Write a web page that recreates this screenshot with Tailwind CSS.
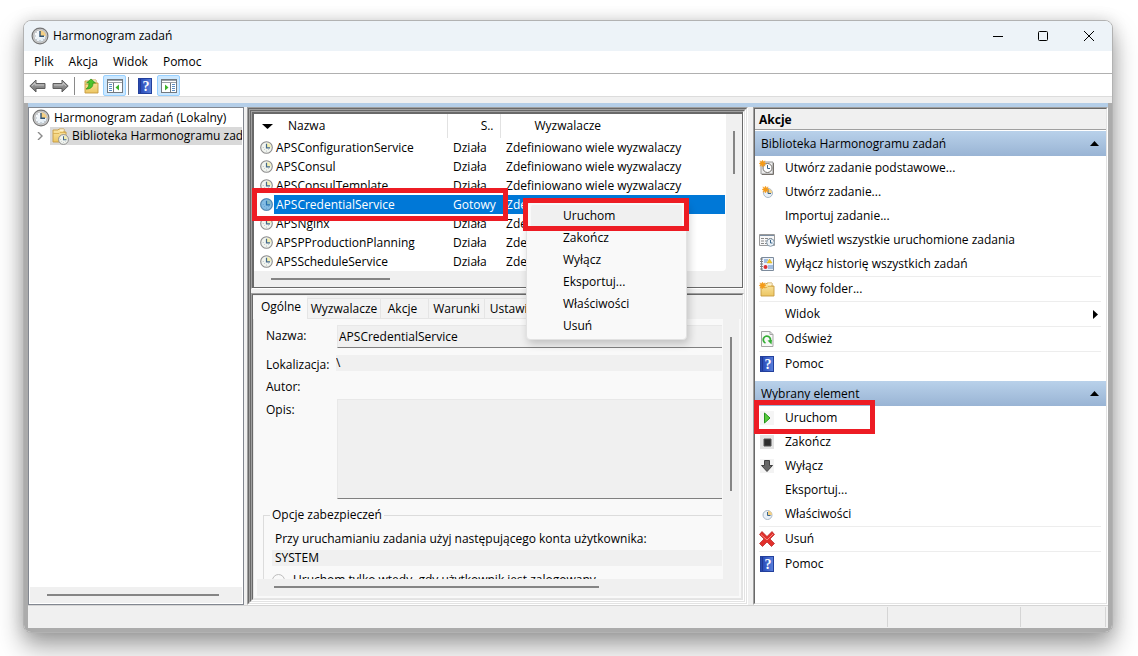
<!DOCTYPE html>
<html lang="pl">
<head>
<meta charset="utf-8">
<title>Harmonogram zadań</title>
<script src="https://cdn.jsdelivr.net/npm/@tailwindcss/browser@4"></script>
</head>
<body class="bg-white font-['Open_Sans','Noto_Sans',sans-serif] text-xs leading-4 text-black">
<svg class="absolute size-0" aria-hidden="true">
  <linearGradient id="steel" x1="0" y1="0" x2="1" y2="1"><stop offset="0" stop-color="#fff"/><stop offset="1" stop-color="#dde9f3"/></linearGradient>
  <linearGradient id="arrowg" x1="0" y1="0" x2="0" y2="1"><stop offset="0" stop-color="#b5b5b5"/><stop offset="1" stop-color="#6c6c6c"/></linearGradient>
  <linearGradient id="helpg" x1="0" y1="0" x2="1" y2="0"><stop offset="0" stop-color="#2746a8"/><stop offset=".25" stop-color="#2d50bd"/><stop offset="1" stop-color="#5b82dc"/></linearGradient>
  <linearGradient id="foldg" x1="0" y1="0" x2="0" y2="1"><stop offset="0" stop-color="#fbe7a8"/><stop offset="1" stop-color="#ecc662"/></linearGradient>
  <symbol id="clock" viewBox="0 0 18 18"><circle cx="9" cy="9" r="7.9" fill="#dcdcdc" stroke="#757575" stroke-width="1.2"/><circle cx="9" cy="9" r="6.2" fill="url(#steel)" stroke="#9a9a9a" stroke-width=".8"/><path d="M9 9V3.2A5.8 5.8 0 0 1 14.8 9Z" fill="#f3cf85"/><path d="M9 4v5.2h4" fill="none" stroke="#2f5272" stroke-width="1.4"/><path d="M3.8 9h1M9 13.2v1M5.5 5.5l.6.6M5.5 12.5l.6-.6M12.5 12.5l-.6-.6" stroke="#8292a0" stroke-width=".8"/></symbol>
  <symbol id="task" viewBox="0 0 13 13"><circle cx="6.5" cy="6.5" r="5.8" fill="#f1f4ef" stroke="#8b8b8b" stroke-width="1.1"/><path d="M7 6.5V2.2A4.3 4.3 0 0 1 11 6.5Z" fill="#f2eeb0"/><path d="M6.5 2.8v4.1h3.5" fill="none" stroke="#426689" stroke-width="1.2"/><path d="M2.8 6.5h.8M6.5 9.7v.8M4 9l.6-.6M9 9l-.6-.6" stroke="#9ba4ab" stroke-width=".8"/></symbol>
  <symbol id="star" viewBox="0 0 8 8"><path d="M4 0l.8 2.200L7 1 5.800 3.200 8 4l-2.200.8L7 7 4.800 5.800 4 8l-.8-2.200L1 7l1.200-2.200L0 4l2.200-.8L1 1l2.200 1.200Z" fill="#f59b18" stroke="#f59b18" stroke-width=".6"/></symbol>
  <symbol id="help" viewBox="0 0 14 16"><rect x=".5" y=".5" width="13" height="15" fill="url(#helpg)" stroke="#23409c"/><path d="M2.500 1v14" stroke="#203a94"/><text x="8" y="13" text-anchor="middle" font-size="14" font-family="Liberation Serif, serif" font-weight="bold" fill="#fff">?</text></symbol>
  <symbol id="folder" viewBox="0 0 16 16"><path d="M2 3h5l1-1h5v3h2v10H2Z" fill="url(#foldg)" stroke="#c69a3e" stroke-width=".9"/><path d="M9 3h4" stroke="#fff"/><path d="M2 6.500h6l1-1h6" stroke="#d5ab4d" stroke-width=".8" fill="none"/></symbol>
  <symbol id="arrow" viewBox="0 0 17 14"><path d="M.8 7 7 1v3.500h9v5H7V13Z" fill="url(#arrowg)" stroke="#5e5e5e"/><path d="M3 7 6 4v2h9" fill="none" stroke="#d4d4d4" stroke-width=".7"/></symbol>
</svg>

<div class="flex h-screen min-h-96 flex-col pt-5 pr-[25px] pb-[23px] pl-[23px]">
<div class="flex min-h-0 flex-1 flex-col overflow-hidden rounded-lg border border-[#b2b2b2] bg-white shadow-[0_14px_26px_rgba(0,0,0,0.36),0_0_16px_rgba(0,0,0,0.14)]">

  <header class="flex h-[30px] shrink-0 items-center bg-[#edf3f8] pl-[7px]">
    <svg class="size-[18px]"><use href="#clock"/></svg>
    <h1 class="ml-1">Harmonogram zadań</h1>
    <div class="ml-auto flex h-full">
      <button class="grid w-[45px] place-items-center" aria-label="Minimalizuj"><svg class="size-3" viewBox="0 0 12 12"><path d="M1 6.500h10" stroke="#000"/></svg></button>
      <button class="grid w-[46px] place-items-center" aria-label="Maksymalizuj"><svg class="size-3" viewBox="0 0 12 12"><rect x="1.500" y="1.500" width="9" height="9" rx="1" fill="none" stroke="#000"/></svg></button>
      <button class="grid w-[46px] place-items-center" aria-label="Zamknij"><svg class="size-3" viewBox="0 0 12 12"><path d="m1 1 10 10M11 1 1 11" stroke="#000"/></svg></button>
    </div>
  </header>

  <nav class="flex h-[23px] shrink-0 items-center gap-[15px] border-b border-[#b0b0b0] px-2.5">
    <button>Plik</button><button>Akcja</button><button>Widok</button><button>Pomoc</button>
  </nav>

  <div class="flex h-[23px] shrink-0 items-center border-b border-[#dcdcdc] pt-px pl-[5px]">
    <button aria-label="Wstecz"><svg class="h-3.5 w-[17px]"><use href="#arrow"/></svg></button>
    <button class="ml-1.5" aria-label="Dalej"><svg class="h-3.5 w-[17px] -scale-x-100"><use href="#arrow"/></svg></button>
    <span class="ml-[5px] h-[18px] w-px bg-[#8a8a8a]"></span>
    <button class="ml-2" aria-label="W górę"><svg class="size-4" viewBox="0 0 16 16"><use href="#folder"/><path d="M3 11C5 10 6 8 6 5H3.500L8 1l4.500 4H10c0 4-2 6-7 6Z" fill="#4cc22a" stroke="#2d8f1d" stroke-width=".7"/></svg></button>
    <button class="ml-1 grid h-[21px] w-[23px] place-items-center rounded-xs border border-[#99d1ff] bg-[#cce8ff]" aria-label="Pokaż drzewo konsoli"><svg class="h-3.5 w-4" viewBox="0 0 16 14"><rect x=".5" y=".5" width="15" height="13" fill="#fff" stroke="#72797f"/><path d="M1 1.500h14M1 3.500h14" stroke="#9aa1a7"/><path d="M6.500 4v9" stroke="#72797f"/><path d="M2 5.500h3M2 7.500h3M2 9.500h3M2 11.500h3" stroke="#5c8fc4"/><path d="m12 5.500-3.500 3 3.500 3Z" fill="#3cb32a"/></svg></button>
    <span class="ml-0.5 h-[18px] w-px bg-[#8a8a8a]"></span>
    <button class="ml-[9px]" aria-label="Pomoc"><svg class="h-4 w-3.5"><use href="#help"/></svg></button>
    <button class="ml-[5px] grid h-[21px] w-[23px] place-items-center rounded-xs border border-[#99d1ff] bg-[#cce8ff]" aria-label="Pokaż okienko akcji"><svg class="h-3.5 w-4" viewBox="0 0 16 14"><rect x=".5" y=".5" width="15" height="13" fill="#fff" stroke="#72797f"/><path d="M1 1.500h14M1 3.500h14" stroke="#9aa1a7"/><path d="M9.500 4v9" stroke="#72797f"/><path d="M11 5.500h3M11 7.500h3M11 9.500h3M11 11.500h3" stroke="#5c8fc4"/><path d="m4 5.500 3.500 3-3.500 3Z" fill="#3cb32a"/></svg></button>
  </div>
  <div class="h-1.5 shrink-0 bg-[#f0f0f0]"></div>

  <div class="flex min-h-0 flex-1 flex-col bg-[#ababab] px-1 pb-1">
    <div class="h-1 shrink-0 bg-[#b4cee8]"></div>
    <main class="flex min-h-0 flex-1 bg-[#f0f0f0]">

      <aside class="flex w-[216px] shrink-0 flex-col border border-[#828790] bg-white p-px">
        <ul class="flex-1">
          <li class="flex h-[18px] items-center pl-[2px]"><svg class="size-[18px]"><use href="#clock"/></svg><span class="ml-1 whitespace-nowrap">Harmonogram zadań (Lokalny)</span></li>
          <li class="flex h-[18px] items-center">
            <svg class="mx-[7px] h-2 w-1.5 shrink-0" viewBox="0 0 6 8"><path d="m1 0 4 4-4 4" fill="none" stroke="#8a8a8a" stroke-width="1.400"/></svg>
            <div class="flex h-full min-w-0 flex-1 items-center overflow-hidden bg-[#d9d9d9] pl-px"><svg class="size-[18px] shrink-0" viewBox="0 0 18 18"><use href="#folder" width="16" height="16"/><use href="#task" x="7" y="7" width="11" height="11"/></svg><span class="ml-[3px] whitespace-nowrap">Biblioteka Harmonogramu zadań</span></div>
          </li>
        </ul>
        <div class="flex h-4 items-center bg-[#f0f0f0] pr-[23px] pl-[17px]"><div class="h-0.5 flex-1 bg-[#858585]"></div></div>
      </aside>

      <section class="relative ml-[3px] min-w-0 flex-1 border border-t-[#a0a0a0] border-r-white border-b-white border-l-[#a0a0a0]">
       <div class="h-full border border-t-[#696969] border-r-[#e3e3e3] border-b-[#e3e3e3] border-l-[#696969]">
        <div class="h-full border border-t-[#a0a0a0] border-r-white border-b-white border-l-[#a0a0a0]">
         <div class="flex h-full flex-col border border-t-[#696969] border-r-[#e3e3e3] border-b-[#e3e3e3] border-l-[#696969]">

          <div class="shrink-0 border border-t-[#a0a0a0] border-r-white border-b-white border-l-[#a0a0a0]">
            <div class="border border-t-2 border-l-2 border-[#696969] bg-[#f0f0f0]">
              <div class="flex">
                <div class="min-w-0 flex-1 overflow-hidden rounded-br-sm bg-white pr-px">
                  <table class="w-full table-fixed border-collapse text-left whitespace-nowrap">
                    <colgroup><col class="w-5"><col class="w-[173px]"><col class="w-[53px]"><col></colgroup>
                    <thead><tr class="h-6 *:font-normal">
                      <th colspan="2" class="border-r border-[#e2e2e2] p-0"><span class="flex items-center pl-2"><svg class="h-[5px] w-[11px]" viewBox="0 0 11 5"><path d="M0 0h11L5.500 5Z"/></svg><span class="ml-[15px]">Nazwa</span></span></th>
                      <th class="border-r border-[#e2e2e2] py-0 pr-1.5 pl-0 text-right">S..</th>
                      <th class="py-0 pr-0 pl-[34px]">Wyzwalacze</th>
                    </tr></thead>
                    <tbody>
                      <tr class="h-[19px]"><td class="p-0 pl-1.5"><svg class="size-[13px]"><use href="#task"/></svg></td><td class="p-0 pl-0.5">APSConfigurationService</td><td class="p-0 pl-1.5">Działa</td><td class="p-0 pl-1.5">Zdefiniowano wiele wyzwalaczy</td></tr>
                      <tr class="h-[19px]"><td class="p-0 pl-1.5"><svg class="size-[13px]"><use href="#task"/></svg></td><td class="p-0 pl-0.5">APSConsul</td><td class="p-0 pl-1.5">Działa</td><td class="p-0 pl-1.5">Zdefiniowano wiele wyzwalaczy</td></tr>
                      <tr class="h-[19px]"><td class="p-0 pl-1.5"><svg class="size-[13px]"><use href="#task"/></svg></td><td class="p-0 pl-0.5">APSConsulTemplate</td><td class="p-0 pl-1.5">Działa</td><td class="p-0 pl-1.5">Zdefiniowano wiele wyzwalaczy</td></tr>
                      <tr class="h-[19px] text-white"><td class="p-0 pl-1.5"><span class="relative block size-[13px]"><svg class="size-[13px]"><use href="#task"/></svg><span class="absolute inset-0 rounded-full bg-[#0078d7]/45"></span></span></td><td class="bg-[#0078d7] p-0 pl-0.5">APSCredentialService</td><td class="bg-[#0078d7] p-0 pl-1.5">Gotowy</td><td class="bg-[#0078d7] p-0 pl-1.5">Zdefiniowano wiele wyzwalaczy</td></tr>
                      <tr class="h-[19px]"><td class="p-0 pl-1.5"><svg class="size-[13px]"><use href="#task"/></svg></td><td class="p-0 pl-0.5">APSNginx</td><td class="p-0 pl-1.5">Działa</td><td class="p-0 pl-1.5">Zdefiniowano wiele wyzwalaczy</td></tr>
                      <tr class="h-[19px]"><td class="p-0 pl-1.5"><svg class="size-[13px]"><use href="#task"/></svg></td><td class="p-0 pl-0.5">APSPProductionPlanning</td><td class="p-0 pl-1.5">Działa</td><td class="p-0 pl-1.5">Zdefiniowano wiele wyzwalaczy</td></tr>
                      <tr class="h-[19px]"><td class="p-0 pl-1.5"><svg class="size-[13px]"><use href="#task"/></svg></td><td class="p-0 pl-0.5">APSScheduleService</td><td class="p-0 pl-1.5">Działa</td><td class="p-0 pl-1.5">Zdefiniowano wiele wyzwalaczy</td></tr>
                    </tbody>
                  </table>
                </div>
                <div class="w-4 shrink-0 pt-[17px] pl-[7px]"><div class="h-[43px] w-0.5 bg-[#858585]"></div></div>
              </div>
              <div class="h-4 pt-[7px] pl-[17px]"><div class="h-0.5 w-[119px] bg-[#858585]"></div></div>
            </div>
          </div>

          <div class="mt-1 flex min-h-0 flex-1 flex-col border border-t-[#a0a0a0] border-r-white border-b-white border-l-[#a0a0a0]">
            <div class="flex min-h-0 flex-1 flex-col border border-t-[#696969] border-r-[#e3e3e3] border-b-[#e3e3e3] border-l-[#696969] bg-[#f0f0f0] pt-px">
              <div class="flex h-[23px] shrink-0 items-end" role="tablist">
                <button class="h-full w-[54px] bg-[#f9f9f9] pb-0.5 pl-0.5" role="tab" aria-selected="true">Ogólne</button>
                <button class="h-[21px] w-[74px] border border-[#e5e5e5] bg-[#f3f3f3] px-0" role="tab">Wyzwalacze</button>
                <button class="h-[21px] w-12 border border-l-0 border-[#e5e5e5] bg-[#f3f3f3] px-0 pr-1" role="tab">Akcje</button>
                <button class="h-[21px] w-14 border border-l-0 border-[#e5e5e5] bg-[#f3f3f3] px-0" role="tab">Warunki</button>
                <button class="h-[21px] w-[72px] border border-l-0 border-[#e5e5e5] bg-[#f3f3f3] px-0" role="tab">Ustawienia</button>
              </div>
              <div class="flex min-h-0 flex-1 flex-col border border-t-0 border-[#e5e5e5] bg-[#f9f9f9] pr-0.5 pb-0.5">
                <div class="flex min-h-0 flex-1">
                  <div class="min-w-0 flex-1 overflow-hidden pt-1.5 pr-px pl-3">
                    <div class="flex h-[23px]"><label for="nazwa" class="w-[71px] pt-[3px]">Nazwa:</label><input id="nazwa" readonly value="APSCredentialService" class="min-w-0 flex-1 border border-r-0 border-[#e8e8e8] border-b-[#808080] bg-[#f0f0f0] pl-px outline-none"></div>
                    <div class="mt-[7px] flex h-4"><label for="lok" class="w-[70px] pt-0.5">Lokalizacja:</label><input id="lok" readonly value="\" class="min-w-0 flex-1 bg-[#f0f0f0] outline-none"></div>
                    <div class="mt-2 h-4">Autor:</div>
                    <div class="mt-1 flex h-[100px]"><label for="opis" class="w-[71px] pt-[3px]">Opis:</label><textarea id="opis" readonly class="min-w-0 flex-1 resize-none border border-r-0 border-[#e8e8e8] border-b-[#808080] bg-[#f0f0f0] outline-none"></textarea></div>
                    <fieldset class="mt-2 -ml-[3px] border border-r-0 border-b-0 border-[#dcdcdc] pl-2">
                      <legend class="-ml-0.5 px-0.5">Opcje zabezpieczeń</legend>
                      <p class="mt-2 ml-[3px] h-4">Przy uruchamianiu zadania użyj następującego konta użytkownika:</p>
                      <p class="mt-[3px] h-4 bg-[#f0f0f0] pl-[3px]">SYSTEM</p>
                      <label class="mt-1.5 flex h-4 items-center"><input type="radio" disabled class="size-[13px] appearance-none rounded-full border border-[#bdbdbd] bg-[#f9f9f9]"><span class="ml-2">Uruchom tylko wtedy, gdy użytkownik jest zalogowany</span></label>
                    </fieldset>
                  </div>
                  <div class="w-4 shrink-0 bg-[#f0f0f0] pt-[18px] pl-[7px]"><div class="h-[154px] w-0.5 bg-[#858585]"></div></div>
                </div>
                <div class="ml-[3px] h-[17px] shrink-0 bg-[#f0f0f0] pt-[7px] pl-[17px]"><div class="h-0.5 w-[325px] bg-[#858585]"></div></div>
              </div>
            </div>
          </div>
         </div>
        </div>
       </div>

       <div class="absolute top-20 left-1 h-[33px] w-64 border-[5px] border-[#ed1c24]"></div>
       <div class="absolute top-[94px] left-[278px] flex w-[161px] flex-col rounded-sm border border-[#e2e2e2] bg-[#f9f9f9] px-1 py-0.5 shadow-[2px_4px_8px_rgba(0,0,0,0.2)]" role="menu">
         <button role="menuitem" class="h-[22px] rounded-xs bg-[#f0f0f0] pl-8 text-left">Uruchom</button>
         <button role="menuitem" class="h-[22px] pl-8 text-left">Zakończ</button>
         <button role="menuitem" class="h-[22px] pl-8 text-left">Wyłącz</button>
         <button role="menuitem" class="h-[22px] pl-8 text-left">Eksportuj...</button>
         <button role="menuitem" class="h-[22px] pl-8 text-left">Właściwości</button>
         <button role="menuitem" class="h-[22px] pl-8 text-left">Usuń</button>
       </div>
       <div class="absolute top-[90px] left-[275px] h-[33px] w-[166px] border-[5px] border-[#ed1c24]"></div>
      </section>

      <aside class="ml-[5px] flex w-[355px] shrink-0 flex-col border border-t-[#a0a0a0] border-r-white border-b-white border-l-[#a0a0a0]">
        <div class="flex-1 border border-t-[#696969] border-r-[#e3e3e3] border-b-[#e3e3e3] border-l-[#696969] bg-white">
          <h2 class="mb-px flex h-[21px] items-center border-b border-[#a0a0a0] bg-[#f0f0f0] pt-0.5 pl-1 font-bold">Akcje</h2>
          <h3 class="flex h-[25px] items-center justify-between bg-linear-to-b from-[#b9d1ea] to-[#99b4d4] pr-[7px] pl-1.5">Biblioteka Harmonogramu zadań<svg class="h-[5px] w-[9px]" viewBox="0 0 9 5"><path d="M0 5h9L4.500 0Z"/></svg></h3>
          <ul class="*:flex *:h-6 *:items-center">
            <li class="pl-1"><svg class="size-4" viewBox="0 0 16 16"><path d="M2 2h12v12H2Z" fill="#ececec" stroke="#989898"/><path d="M14.500 3v11.500H3" stroke="#75706b" fill="none"/><circle cx="8.500" cy="8" r="4.500" fill="#fff" stroke="#726f6b"/><path d="M8.500 5v3.500H11" stroke="#39658a" fill="none"/><use href="#star" width="7" height="7"/></svg><button class="ml-2.5">Utwórz zadanie podstawowe...</button></li>
            <li class="pl-1"><svg class="size-4" viewBox="0 0 16 16"><circle cx="9" cy="9" r="4.500" fill="#e9f0f7" stroke="#a8b7c5"/><path d="M9 9V5a4 4 0 0 1 4 4Z" fill="#f3cf85"/><path d="M9 6v3.500h3" stroke="#39658a" fill="none"/><use href="#star" x="3" y="2" width="7" height="7"/></svg><button class="ml-2.5">Utwórz zadanie...</button></li>
            <li class="pl-[30px]"><button>Importuj zadanie...</button></li>
            <li class="pl-1"><svg class="size-4" viewBox="0 0 16 16"><path d="M.5 2.500h15v11H.5Z" fill="#f7f7f7" stroke="#9a9a9a"/><path d="M1 3.500h14" stroke="#7b8da0"/><path d="M2 6.500h3m1 0h3m1 0h3M2 9h3m1 0h2M2 11.500h3m1 0h2" stroke="#888"/><circle cx="11.500" cy="10.500" r="3.800" fill="#eef3f8" stroke="#8499aa"/><path d="M11.500 8v3h2" fill="none" stroke="#39658a"/></svg><button class="ml-2.5">Wyświetl wszystkie uruchomione zadania</button></li>
            <li class="pl-1"><svg class="size-4" viewBox="0 0 16 16"><path d="M2.500 1.500h12v13h-12Z" fill="#edf3fb" stroke="#7c8b9c"/><path d="M1 3h3M1 5.500h3M1 8h3M1 10.500h3M1 13h3" stroke="#7c7c7c"/><path d="M5 4h4M5 6h3M9 10h5M9 12h5" stroke="#5687c5"/><path d="m10.500 3 2.500 4H8Z" fill="#f3cb20" stroke="#d0a512" stroke-width=".5"/><circle cx="6.500" cy="11" r="2" fill="#db2f2f"/></svg><button class="ml-2.5">Wyłącz historię wszystkich zadań</button></li>
          </ul>
          <hr class="mr-[5px] ml-1 border-[#ededed]">
          <div class="flex h-6 items-center pl-1"><svg class="size-4" viewBox="0 0 16 16"><use href="#folder"/><use href="#star" y="1" width="7" height="7"/></svg><button class="ml-2.5">Nowy folder...</button></div>
          <hr class="mr-[5px] ml-1 border-[#ededed]">
          <div class="flex h-6 items-center justify-between pr-2 pl-[30px]"><button>Widok</button><svg class="h-[9px] w-[5px]" viewBox="0 0 5 9"><path d="M0 0v9l5-4.500Z"/></svg></div>
          <hr class="mr-[5px] ml-1 border-[#ededed]">
          <div class="flex h-6 items-center pl-1"><svg class="size-4" viewBox="0 0 16 16"><path d="M2.500.5h8.500l3 3v12H2.500Z" fill="#f8f8f8" stroke="#a5a5a5"/><path d="M11 .5v3h3" fill="none" stroke="#a5a5a5"/><path d="M6.500 12a3.600 3.600 0 1 1 4.500-1.500" fill="none" stroke="#35ad35" stroke-width="1.800"/><path d="m8.500 9.500 4.500-.5-.5 4.500Z" fill="#35ad35"/></svg><button class="ml-2.5">Odśwież</button></div>
          <hr class="mr-[5px] ml-1 border-[#ededed]">
          <div class="flex h-6 items-center pl-[5px]"><svg class="h-4 w-3.5"><use href="#help"/></svg><button class="ml-[11px]">Pomoc</button></div>

          <h3 class="mt-[5px] flex h-[25px] items-center justify-between bg-linear-to-b from-[#b9d1ea] to-[#99b4d4] pr-[7px] pl-1.5">Wybrany element<svg class="h-[5px] w-[9px]" viewBox="0 0 9 5"><path d="M0 5h9L4.500 0Z"/></svg></h3>
          <ul class="*:flex *:h-6 *:items-center">
            <li class="relative pl-1"><svg class="size-4" viewBox="0 0 16 16"><path d="M1 1h14v14H1Z" fill="#f5f5f5"/><path d="M5.500 3v10l5.500-5Z" fill="#58cb3c" stroke="#24941b"/></svg><button class="ml-2.5">Uruchom</button><span class="absolute -top-1.5 -left-px h-[34px] w-[121px] border-[5px] border-[#ed1c24]"></span></li>
            <li class="pl-1"><svg class="size-4" viewBox="0 0 16 16"><path d="M1 1h14v14H1Z" fill="#e3e3e3"/><path d="M5 5h7v7H5Z" fill="#2e2e2e" stroke="#555"/></svg><button class="ml-2.5">Zakończ</button></li>
            <li class="pl-1"><svg class="size-4" viewBox="0 0 16 16"><path d="M1 1h14v14H1Z" fill="#f3f3f3"/><path d="M5.500 2.500h5v5h3L8 13.500 2.500 7.500h3Z" fill="#666" stroke="#404040"/></svg><button class="ml-2.5">Wyłącz</button></li>
            <li class="pl-[30px]"><button>Eksportuj...</button></li>
            <li class="pl-1"><svg class="size-4" viewBox="0 0 16 16"><circle cx="8.500" cy="9" r="4.500" fill="#e9f0f7" stroke="#a8b7c5"/><path d="M9 9V5a4 4 0 0 1 4 4Z" fill="#f3cf85"/><path d="M8.500 6v3.500h3" stroke="#39658a" fill="none"/></svg><button class="ml-2.5">Właściwości</button></li>
          </ul>
          <hr class="mr-[5px] ml-1 border-[#ededed]">
          <div class="flex h-6 items-center pl-1"><svg class="size-4" viewBox="0 0 16 16"><path d="M3 .5 8 5.500l5-5 2.500 3L11 8l4.500 4.500-3 3L8 11l-4.500 4.500-3-3L5 8 .5 3.500Z" fill="#e2302c" stroke="#b32121" stroke-width=".7"/><path d="M2 3.500 8 9l6-6" stroke="#f58880" fill="none"/></svg><button class="ml-2.5">Usuń</button></div>
          <hr class="mr-[5px] ml-1 border-[#ededed]">
          <div class="flex h-6 items-center pl-[5px]"><svg class="h-4 w-3.5"><use href="#help"/></svg><button class="ml-[11px]">Pomoc</button></div>
        </div>
      </aside>
    </main>
    <footer class="flex h-[23px] shrink-0 justify-end border-t border-[#d5d5d5] bg-[#f0f0f0] py-px pr-0.5">
      <div class="w-[133px] border-l border-[#d5d5d5]"></div>
      <div class="w-[86px] border-x border-[#d5d5d5]"></div>
    </footer>
  </div>
</div>
</div>
</body>
</html>
